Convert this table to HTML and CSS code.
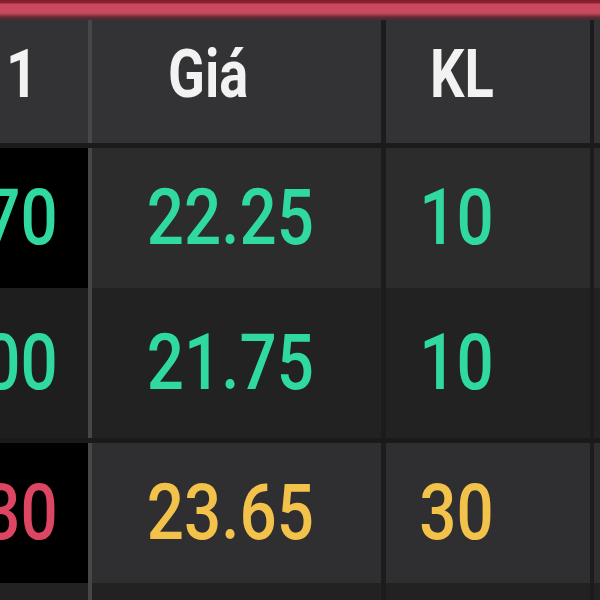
FILE: index.html
```html
<!DOCTYPE html>
<html lang="vi">
<head>
  <meta charset="UTF-8">
  <title>Bảng giá</title>
  <link rel="stylesheet" href="styles.css">
</head>
<body>
  <div class="board">
    <div class="topbar"></div>

    <div class="row head">
      <div class="cell c1"><span class="t">1</span></div>
      <div class="cell c2"><span class="t">Giá</span></div>
      <div class="cell c3"><span class="t">KL</span></div>
      <div class="cell c4"></div>
    </div>

    <div class="row r1">
      <div class="cell c1 up"><span class="t">70</span></div>
      <div class="cell c2 up"><span class="t">22.25</span></div>
      <div class="cell c3 up"><span class="t">10</span></div>
      <div class="cell c4"></div>
    </div>

    <div class="row r2">
      <div class="cell c1 up"><span class="t">00</span></div>
      <div class="cell c2 up"><span class="t">21.75</span></div>
      <div class="cell c3 up"><span class="t">10</span></div>
      <div class="cell c4"></div>
    </div>

    <div class="row r3">
      <div class="cell c1 down"><span class="t">30</span></div>
      <div class="cell c2 ref"><span class="t">23.65</span></div>
      <div class="cell c3 ref"><span class="t">30</span></div>
      <div class="cell c4"></div>
    </div>

    <div class="row r4">
      <div class="cell c1"></div>
      <div class="cell c2"></div>
      <div class="cell c3"></div>
      <div class="cell c4"></div>
    </div>
  </div>
</body>
</html>
```

FILE: styles.css
```css
body {
  margin: 0;
  background-color: #222;
  font-family: Roboto, 'Liberation Sans', sans-serif;
}

.board {
  width: 600px;
  height: 600px;
  overflow: hidden;
  background-color: #222;
}

.topbar {
  height: 20px;
  background: linear-gradient(#7e1c2a 0, #8e2434 3px, #c94a5e 4px, #c94a5e 13px, #6a2a34 17px, #3a3032 20px);
}

.row {
  display: grid;
  grid-template-columns: 92px 294px 208px 1fr;
}

.cell {
  box-sizing: border-box;
  display: flex;
  align-items: center;
  justify-content: flex-end;
  line-height: 1;
}

.c1 {
  border-right: 4px solid #474747;
  padding-right: 30px;
}

.c2 {
  border-right: 5px solid #1c1c1c;
  padding-right: 67px;
}

.c3 {
  border-right: 4px solid #1c1c1c;
  padding-right: 96px;
}

.t {
  display: inline-block;
  transform: scaleX(0.84);
  transform-origin: right center;
}

/* header */
.head {
  height: 128px;
  border-bottom: 5px solid #1b1b1b;
  box-sizing: border-box;
  background-color: #333335;
  color: #f2f2f2;
  font-size: 66px;
  font-weight: bold;
}

.head .cell {
  padding-bottom: 14px;
}

.head .c1 {
  padding-right: 50px;
}

.head .c2 {
  justify-content: flex-start;
  padding-left: 76px;
  padding-right: 0;
}

.head .c2 .t {
  transform: scaleX(0.82);
  transform-origin: left center;
}

.head .c3 .t {
  transform: scaleX(0.82);
}

/* rows */
.r1, .r2, .r3 {
  font-size: 78px;
  font-weight: 500;
}

.r1 {
  height: 140px;
  background-color: #2c2c2c;
}

.r2 {
  height: 155px;
  border-bottom: 5px solid #1a1a1a;
  box-sizing: border-box;
  background-color: #222;
}

.r3 {
  height: 140px;
  background-color: #2f2f31;
}

.r4 {
  height: 17px;
  background-color: #222;
}

.r1 .c1, .r3 .c1 {
  background-color: #000;
}

.r2 .c1 {
  background-color: #1e1e1e;
}

.up {
  color: #30d9a0;
}

.down {
  color: #dc4663;
}

.ref {
  color: #f2c24a;
}
```
